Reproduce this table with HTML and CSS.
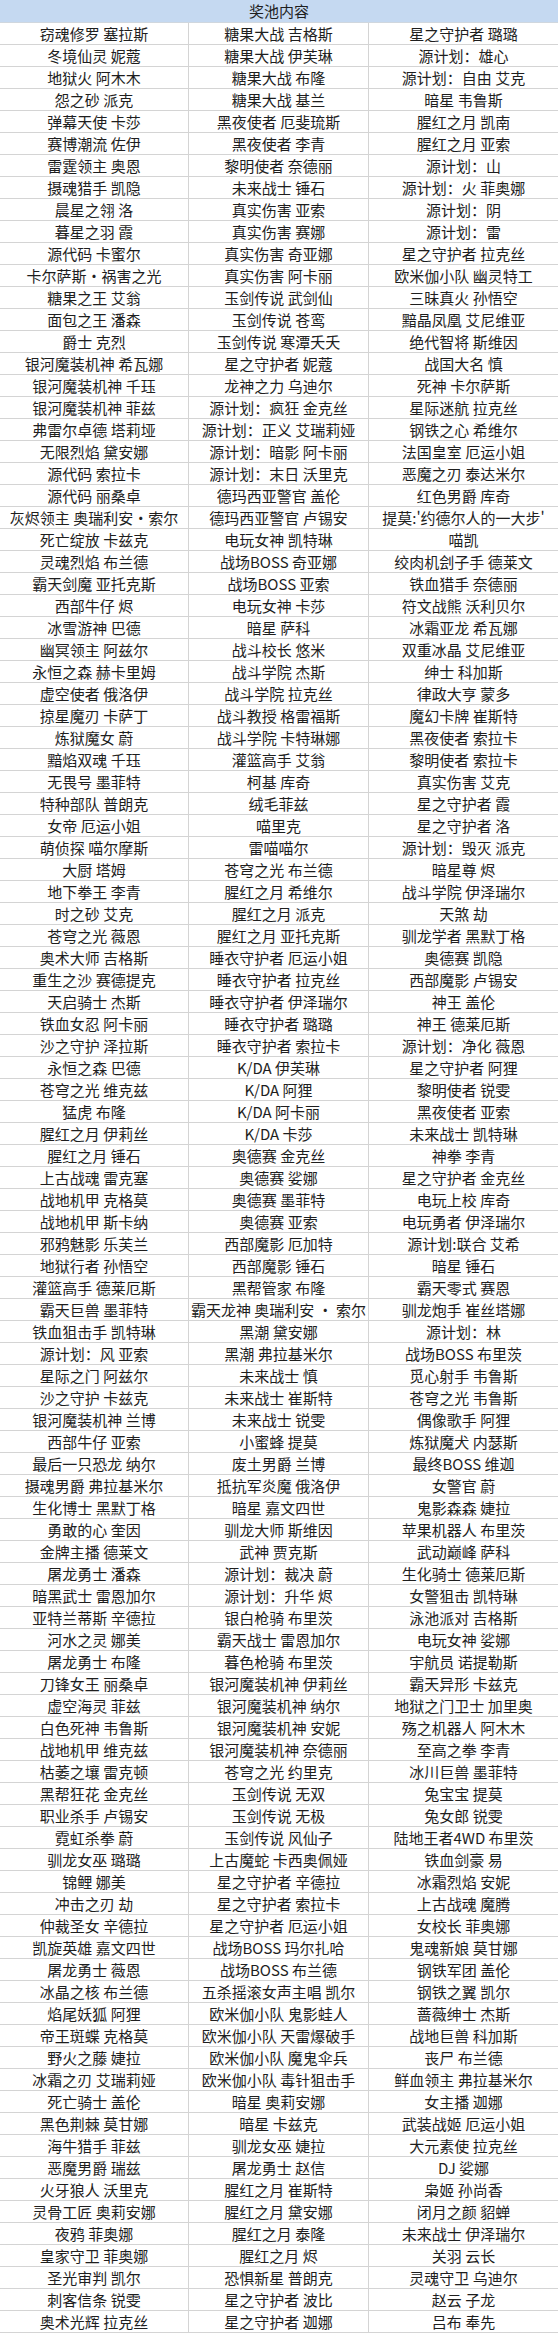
FILE: index.html
```html
<!DOCTYPE html>
<html lang="zh-CN">
<head>
<meta charset="utf-8">
<title>奖池内容</title>
<link rel="stylesheet" href="styles.css">
</head>
<body>
<div class="pool">
<div class="pool-head">奖池内容</div>
<div class="pool-grid">
<div class="cell">窃魂修罗 塞拉斯</div><div class="cell">糖果大战 吉格斯</div><div class="cell">星之守护者 璐璐</div>
<div class="cell">冬境仙灵 妮蔻</div><div class="cell">糖果大战 伊芙琳</div><div class="cell">源计划：雄心</div>
<div class="cell">地狱火 阿木木</div><div class="cell">糖果大战 布隆</div><div class="cell">源计划：自由 艾克</div>
<div class="cell">怨之砂 派克</div><div class="cell">糖果大战 基兰</div><div class="cell">暗星 韦鲁斯</div>
<div class="cell">弹幕天使 卡莎</div><div class="cell">黑夜使者 厄斐琉斯</div><div class="cell">腥红之月 凯南</div>
<div class="cell">赛博潮流 佐伊</div><div class="cell">黑夜使者 李青</div><div class="cell">腥红之月 亚索</div>
<div class="cell">雷霆领主 奥恩</div><div class="cell">黎明使者 奈德丽</div><div class="cell">源计划：山</div>
<div class="cell">摄魂猎手 凯隐</div><div class="cell">未来战士 锤石</div><div class="cell">源计划：火 菲奥娜</div>
<div class="cell">晨星之翎 洛</div><div class="cell">真实伤害 亚索</div><div class="cell">源计划：阴</div>
<div class="cell">暮星之羽 霞</div><div class="cell">真实伤害 赛娜</div><div class="cell">源计划：雷</div>
<div class="cell">源代码 卡蜜尔</div><div class="cell">真实伤害 奇亚娜</div><div class="cell">星之守护者 拉克丝</div>
<div class="cell">卡尔萨斯·祸害之光</div><div class="cell">真实伤害 阿卡丽</div><div class="cell">欧米伽小队 幽灵特工</div>
<div class="cell">糖果之王 艾翁</div><div class="cell">玉剑传说 武剑仙</div><div class="cell">三昧真火 孙悟空</div>
<div class="cell">面包之王 潘森</div><div class="cell">玉剑传说 苍鸾</div><div class="cell">黯晶凤凰 艾尼维亚</div>
<div class="cell">爵士 克烈</div><div class="cell">玉剑传说 寒潭夭夭</div><div class="cell">绝代智将 斯维因</div>
<div class="cell">银河魔装机神 希瓦娜</div><div class="cell">星之守护者 妮蔻</div><div class="cell">战国大名 慎</div>
<div class="cell">银河魔装机神 千珏</div><div class="cell">龙神之力 乌迪尔</div><div class="cell">死神 卡尔萨斯</div>
<div class="cell">银河魔装机神 菲兹</div><div class="cell">源计划：疯狂 金克丝</div><div class="cell">星际迷航 拉克丝</div>
<div class="cell">弗雷尔卓德 塔莉垭</div><div class="cell">源计划：正义 艾瑞莉娅</div><div class="cell">钢铁之心 希维尔</div>
<div class="cell">无限烈焰 黛安娜</div><div class="cell">源计划：暗影 阿卡丽</div><div class="cell">法国皇室 厄运小姐</div>
<div class="cell">源代码 索拉卡</div><div class="cell">源计划：末日 沃里克</div><div class="cell">恶魔之刃 泰达米尔</div>
<div class="cell">源代码 丽桑卓</div><div class="cell">德玛西亚警官 盖伦</div><div class="cell">红色男爵 库奇</div>
<div class="cell">灰烬领主 奥瑞利安·索尔</div><div class="cell">德玛西亚警官 卢锡安</div><div class="cell">提莫:'约德尔人的一大步'</div>
<div class="cell">死亡绽放 卡兹克</div><div class="cell">电玩女神 凯特琳</div><div class="cell">喵凯</div>
<div class="cell">灵魂烈焰 布兰德</div><div class="cell">战场BOSS 奇亚娜</div><div class="cell">绞肉机刽子手 德莱文</div>
<div class="cell">霸天剑魔 亚托克斯</div><div class="cell">战场BOSS 亚索</div><div class="cell">铁血猎手 奈德丽</div>
<div class="cell">西部牛仔 烬</div><div class="cell">电玩女神 卡莎</div><div class="cell">符文战熊 沃利贝尔</div>
<div class="cell">冰雪游神 巴德</div><div class="cell">暗星 萨科</div><div class="cell">冰霜亚龙 希瓦娜</div>
<div class="cell">幽冥领主 阿兹尔</div><div class="cell">战斗校长 悠米</div><div class="cell">双重冰晶 艾尼维亚</div>
<div class="cell">永恒之森 赫卡里姆</div><div class="cell">战斗学院 杰斯</div><div class="cell">绅士 科加斯</div>
<div class="cell">虚空使者 俄洛伊</div><div class="cell">战斗学院 拉克丝</div><div class="cell">律政大亨 蒙多</div>
<div class="cell">掠星魔刃 卡萨丁</div><div class="cell">战斗教授 格雷福斯</div><div class="cell">魔幻卡牌 崔斯特</div>
<div class="cell">炼狱魔女 蔚</div><div class="cell">战斗学院 卡特琳娜</div><div class="cell">黑夜使者 索拉卡</div>
<div class="cell">黯焰双魂 千珏</div><div class="cell">灌篮高手 艾翁</div><div class="cell">黎明使者 索拉卡</div>
<div class="cell">无畏号 墨菲特</div><div class="cell">柯基 库奇</div><div class="cell">真实伤害 艾克</div>
<div class="cell">特种部队 普朗克</div><div class="cell">绒毛菲兹</div><div class="cell">星之守护者 霞</div>
<div class="cell">女帝 厄运小姐</div><div class="cell">喵里克</div><div class="cell">星之守护者 洛</div>
<div class="cell">萌侦探 喵尔摩斯</div><div class="cell">雷喵喵尔</div><div class="cell">源计划：毁灭 派克</div>
<div class="cell">大厨 塔姆</div><div class="cell">苍穹之光 布兰德</div><div class="cell">暗星尊 烬</div>
<div class="cell">地下拳王 李青</div><div class="cell">腥红之月 希维尔</div><div class="cell">战斗学院 伊泽瑞尔</div>
<div class="cell">时之砂 艾克</div><div class="cell">腥红之月 派克</div><div class="cell">天煞 劫</div>
<div class="cell">苍穹之光 薇恩</div><div class="cell">腥红之月 亚托克斯</div><div class="cell">驯龙学者 黑默丁格</div>
<div class="cell">奥术大师 吉格斯</div><div class="cell">睡衣守护者 厄运小姐</div><div class="cell">奥德赛 凯隐</div>
<div class="cell">重生之沙 赛德提克</div><div class="cell">睡衣守护者 拉克丝</div><div class="cell">西部魔影 卢锡安</div>
<div class="cell">天启骑士 杰斯</div><div class="cell">睡衣守护者 伊泽瑞尔</div><div class="cell">神王 盖伦</div>
<div class="cell">铁血女忍 阿卡丽</div><div class="cell">睡衣守护者 璐璐</div><div class="cell">神王 德莱厄斯</div>
<div class="cell">沙之守护 泽拉斯</div><div class="cell">睡衣守护者 索拉卡</div><div class="cell">源计划：净化 薇恩</div>
<div class="cell">永恒之森 巴德</div><div class="cell">K/DA 伊芙琳</div><div class="cell">星之守护者 阿狸</div>
<div class="cell">苍穹之光 维克兹</div><div class="cell">K/DA 阿狸</div><div class="cell">黎明使者 锐雯</div>
<div class="cell">猛虎 布隆</div><div class="cell">K/DA 阿卡丽</div><div class="cell">黑夜使者 亚索</div>
<div class="cell">腥红之月 伊莉丝</div><div class="cell">K/DA 卡莎</div><div class="cell">未来战士 凯特琳</div>
<div class="cell">腥红之月 锤石</div><div class="cell">奥德赛 金克丝</div><div class="cell">神拳 李青</div>
<div class="cell">上古战魂 雷克塞</div><div class="cell">奥德赛 娑娜</div><div class="cell">星之守护者 金克丝</div>
<div class="cell">战地机甲 克格莫</div><div class="cell">奥德赛 墨菲特</div><div class="cell">电玩上校 库奇</div>
<div class="cell">战地机甲 斯卡纳</div><div class="cell">奥德赛 亚索</div><div class="cell">电玩勇者 伊泽瑞尔</div>
<div class="cell">邪鸦魅影 乐芙兰</div><div class="cell">西部魔影 厄加特</div><div class="cell">源计划:联合 艾希</div>
<div class="cell">地狱行者 孙悟空</div><div class="cell">西部魔影 锤石</div><div class="cell">暗星 锤石</div>
<div class="cell">灌篮高手 德莱厄斯</div><div class="cell">黑帮管家 布隆</div><div class="cell">霸天零式 赛恩</div>
<div class="cell">霸天巨兽 墨菲特</div><div class="cell">霸天龙神 奥瑞利安 · 索尔</div><div class="cell">驯龙炮手 崔丝塔娜</div>
<div class="cell">铁血狙击手 凯特琳</div><div class="cell">黑潮 黛安娜</div><div class="cell">源计划：林</div>
<div class="cell">源计划：风 亚索</div><div class="cell">黑潮 弗拉基米尔</div><div class="cell">战场BOSS 布里茨</div>
<div class="cell">星际之门 阿兹尔</div><div class="cell">未来战士 慎</div><div class="cell">觅心射手 韦鲁斯</div>
<div class="cell">沙之守护 卡兹克</div><div class="cell">未来战士 崔斯特</div><div class="cell">苍穹之光 韦鲁斯</div>
<div class="cell">银河魔装机神 兰博</div><div class="cell">未来战士 锐雯</div><div class="cell">偶像歌手 阿狸</div>
<div class="cell">西部牛仔 亚索</div><div class="cell">小蜜蜂 提莫</div><div class="cell">炼狱魔犬 内瑟斯</div>
<div class="cell">最后一只恐龙 纳尔</div><div class="cell">废土男爵 兰博</div><div class="cell">最终BOSS 维迦</div>
<div class="cell">摄魂男爵 弗拉基米尔</div><div class="cell">抵抗军炎魔 俄洛伊</div><div class="cell">女警官 蔚</div>
<div class="cell">生化博士 黑默丁格</div><div class="cell">暗星 嘉文四世</div><div class="cell">鬼影森森 婕拉</div>
<div class="cell">勇敢的心 奎因</div><div class="cell">驯龙大师 斯维因</div><div class="cell">苹果机器人 布里茨</div>
<div class="cell">金牌主播 德莱文</div><div class="cell">武神 贾克斯</div><div class="cell">武动巅峰 萨科</div>
<div class="cell">屠龙勇士 潘森</div><div class="cell">源计划：裁决 蔚</div><div class="cell">生化骑士 德莱厄斯</div>
<div class="cell">暗黑武士 雷恩加尔</div><div class="cell">源计划：升华 烬</div><div class="cell">女警狙击 凯特琳</div>
<div class="cell">亚特兰蒂斯 辛德拉</div><div class="cell">银白枪骑 布里茨</div><div class="cell">泳池派对 吉格斯</div>
<div class="cell">河水之灵 娜美</div><div class="cell">霸天战士 雷恩加尔</div><div class="cell">电玩女神 娑娜</div>
<div class="cell">屠龙勇士 布隆</div><div class="cell">暮色枪骑 布里茨</div><div class="cell">宇航员 诺提勒斯</div>
<div class="cell">刀锋女王 丽桑卓</div><div class="cell">银河魔装机神 伊莉丝</div><div class="cell">霸天异形 卡兹克</div>
<div class="cell">虚空海灵 菲兹</div><div class="cell">银河魔装机神 纳尔</div><div class="cell">地狱之门卫士 加里奥</div>
<div class="cell">白色死神 韦鲁斯</div><div class="cell">银河魔装机神 安妮</div><div class="cell">殇之机器人 阿木木</div>
<div class="cell">战地机甲 维克兹</div><div class="cell">银河魔装机神 奈德丽</div><div class="cell">至高之拳 李青</div>
<div class="cell">枯萎之壤 雷克顿</div><div class="cell">苍穹之光 约里克</div><div class="cell">冰川巨兽 墨菲特</div>
<div class="cell">黑帮狂花 金克丝</div><div class="cell">玉剑传说 无双</div><div class="cell">兔宝宝 提莫</div>
<div class="cell">职业杀手 卢锡安</div><div class="cell">玉剑传说 无极</div><div class="cell">兔女郎 锐雯</div>
<div class="cell">霓虹杀拳 蔚</div><div class="cell">玉剑传说 风仙子</div><div class="cell">陆地王者4WD 布里茨</div>
<div class="cell">驯龙女巫 璐璐</div><div class="cell">上古魔蛇 卡西奥佩娅</div><div class="cell">铁血剑豪 易</div>
<div class="cell">锦鲤 娜美</div><div class="cell">星之守护者 辛德拉</div><div class="cell">冰霜烈焰 安妮</div>
<div class="cell">冲击之刃 劫</div><div class="cell">星之守护者 索拉卡</div><div class="cell">上古战魂 魔腾</div>
<div class="cell">仲裁圣女 辛德拉</div><div class="cell">星之守护者 厄运小姐</div><div class="cell">女校长 菲奥娜</div>
<div class="cell">凯旋英雄 嘉文四世</div><div class="cell">战场BOSS 玛尔扎哈</div><div class="cell">鬼魂新娘 莫甘娜</div>
<div class="cell">屠龙勇士 薇恩</div><div class="cell">战场BOSS 布兰德</div><div class="cell">钢铁军团 盖伦</div>
<div class="cell">冰晶之核 布兰德</div><div class="cell">五杀摇滚女声主唱 凯尔</div><div class="cell">钢铁之翼 凯尔</div>
<div class="cell">焰尾妖狐 阿狸</div><div class="cell">欧米伽小队 鬼影蛙人</div><div class="cell">蔷薇绅士 杰斯</div>
<div class="cell">帝王斑蝶 克格莫</div><div class="cell">欧米伽小队 天雷爆破手</div><div class="cell">战地巨兽 科加斯</div>
<div class="cell">野火之藤 婕拉</div><div class="cell">欧米伽小队 魔鬼伞兵</div><div class="cell">丧尸 布兰德</div>
<div class="cell">冰霜之刃 艾瑞莉娅</div><div class="cell">欧米伽小队 毒针狙击手</div><div class="cell">鲜血领主 弗拉基米尔</div>
<div class="cell">死亡骑士 盖伦</div><div class="cell">暗星 奥莉安娜</div><div class="cell">女主播 迦娜</div>
<div class="cell">黑色荆棘 莫甘娜</div><div class="cell">暗星 卡兹克</div><div class="cell">武装战姬 厄运小姐</div>
<div class="cell">海牛猎手 菲兹</div><div class="cell">驯龙女巫 婕拉</div><div class="cell">大元素使 拉克丝</div>
<div class="cell">恶魔男爵 瑞兹</div><div class="cell">屠龙勇士 赵信</div><div class="cell">DJ 娑娜</div>
<div class="cell">火牙狼人 沃里克</div><div class="cell">腥红之月 崔斯特</div><div class="cell">枭姬 孙尚香</div>
<div class="cell">灵骨工匠 奥莉安娜</div><div class="cell">腥红之月 黛安娜</div><div class="cell">闭月之颜 貂蝉</div>
<div class="cell">夜鸦 菲奥娜</div><div class="cell">腥红之月 泰隆</div><div class="cell">未来战士 伊泽瑞尔</div>
<div class="cell">皇家守卫 菲奥娜</div><div class="cell">腥红之月 烬</div><div class="cell">关羽 云长</div>
<div class="cell">圣光审判 凯尔</div><div class="cell">恐惧新星 普朗克</div><div class="cell">灵魂守卫 乌迪尔</div>
<div class="cell">刺客信条 锐雯</div><div class="cell">星之守护者 波比</div><div class="cell">赵云 子龙</div>
<div class="cell">奥术光辉 拉克丝</div><div class="cell">星之守护者 迦娜</div><div class="cell">吕布 奉先</div>
</div>
</div>
</body>
</html>
```
FILE: styles.css
```css
html, body {
  margin: 0;
  padding: 0;
  background: #ffffff;
}

.pool {
  width: 558px;
  font-family: "Noto Sans CJK SC", "Noto Sans", "Liberation Sans", sans-serif;
  font-size: 15px;
  color: #1e1e1e;
}

.pool-head {
  box-sizing: border-box;
  height: 23px;
  line-height: 22px;
  text-align: center;
  background: #c5d9f1;
  border-bottom: 1px solid #d0d7de;
}

.pool-grid {
  display: grid;
  grid-template-columns: 189px 180px 189px;
  grid-auto-rows: 22px;
}

.cell {
  box-sizing: border-box;
  height: 22px;
  line-height: 21px;
  text-align: center;
  white-space: nowrap;
  overflow: hidden;
  border-bottom: 1px solid #d4d4d4;
  border-right: 1px solid #d4d4d4;
}

.cell:nth-child(3n) {
  border-right: none;
}
```
